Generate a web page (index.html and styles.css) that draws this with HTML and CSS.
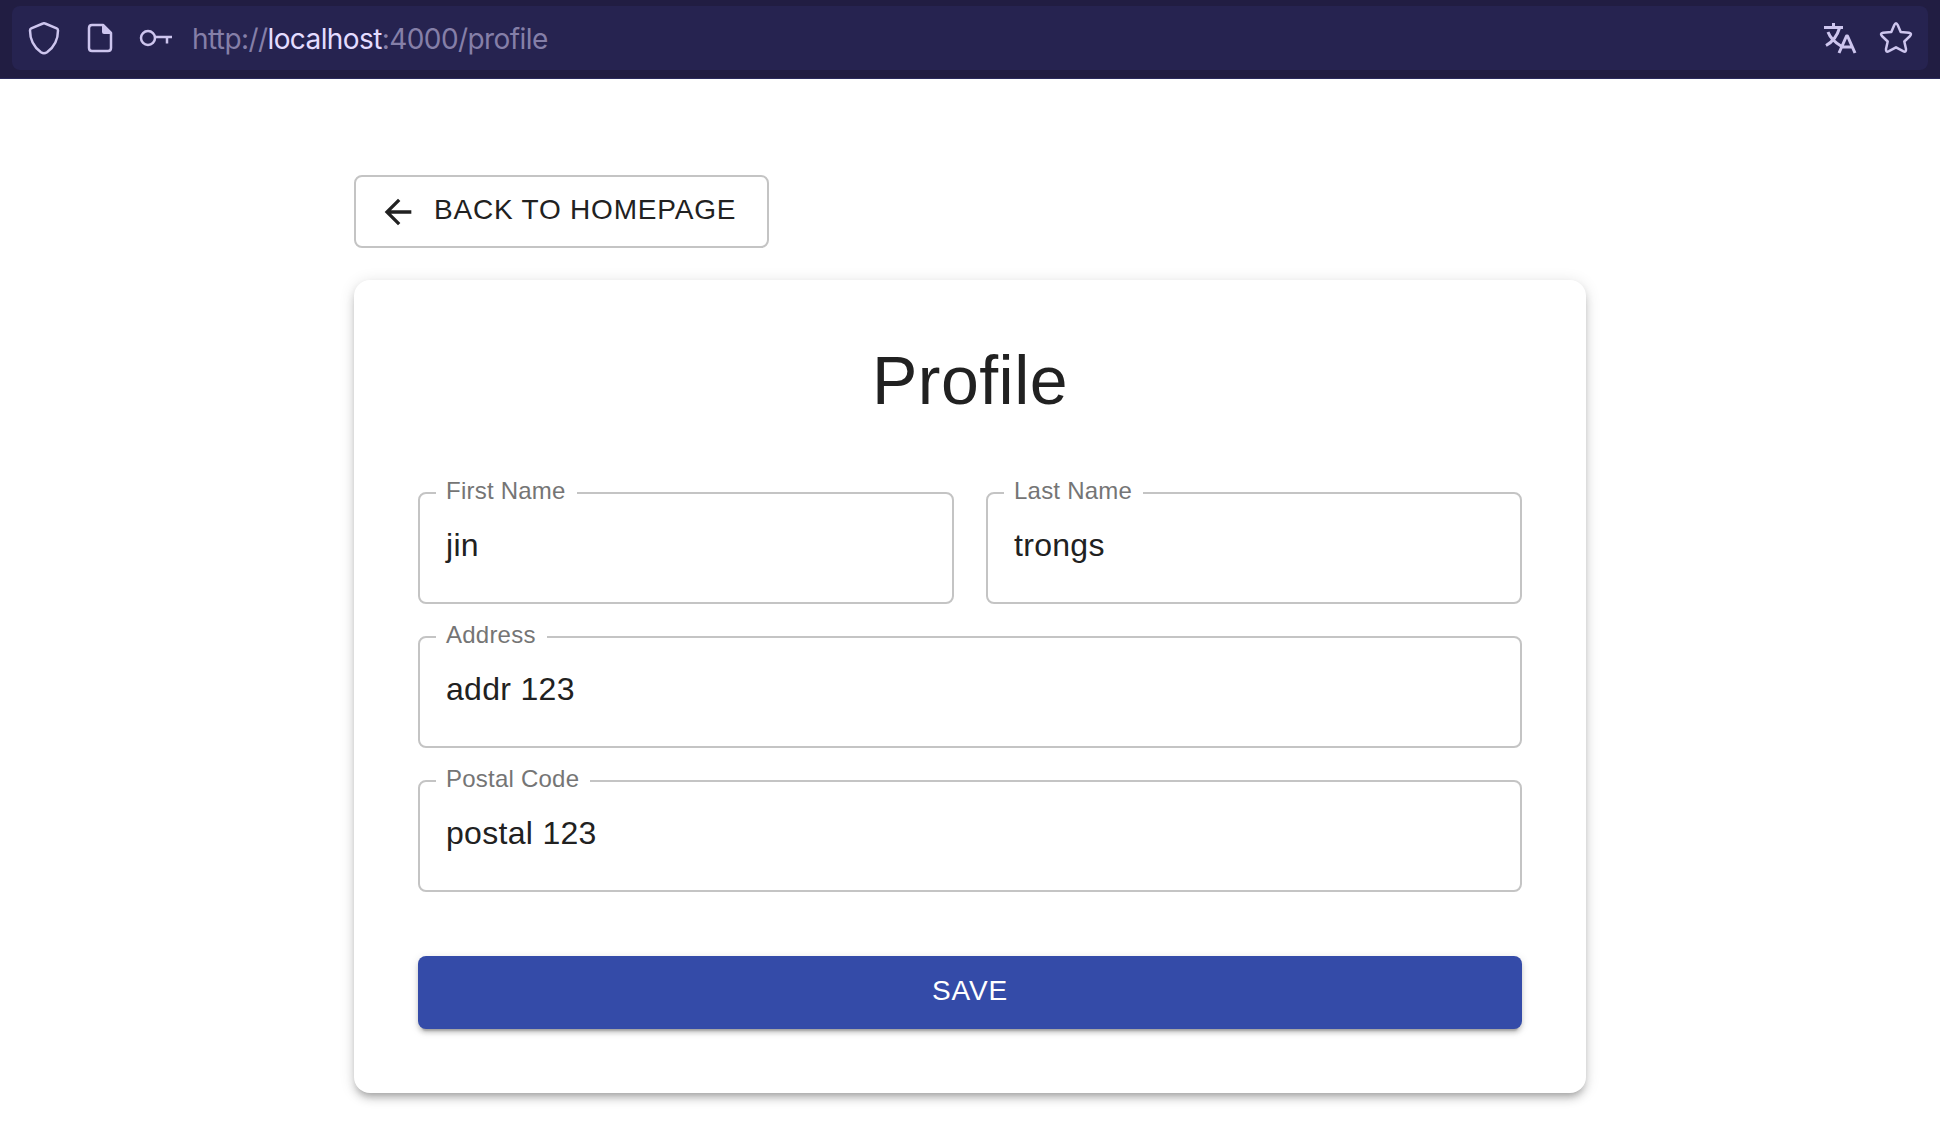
FILE: index.html
```html
<!DOCTYPE html>
<html lang="en">
<head>
<meta charset="utf-8">
<title>Profile</title>
<link rel="stylesheet" href="styles.css">
</head>
<body>
<header class="toolbar">
  <div class="urlbar">
    <svg class="icon shield" width="32" height="34" viewBox="0 0 32 34"><path d="M14.9 2.5q1.1-.5 2.2 0l11.6 4.9q1.3.6 1.3 2c0 9.500-3 16-11 21.800q-3 2-6 0C5 25.400 2 18.900 2 9.400q0-1.400 1.300-2z"/></svg>
    <svg class="icon page" width="26" height="30" viewBox="0 0 26 30"><path d="M5 2h11l8 8v15q0 3-3 3H5q-3 0-3-3V5q0-3 3-3z"/><path class="fill" d="M15 1l10 9v1h-8q-2 0-2-2z"/></svg>
    <svg class="icon key" width="34" height="18" viewBox="0 0 34 18"><circle cx="9" cy="9" r="7"/><path d="M16 8h17M28 8v6.500"/></svg>
    <div class="url">http://<span class="host">localhost</span>:4000/profile</div>
    <svg class="icon translate" width="34" height="32" viewBox="0 0 34 32"><path d="M1 5.500h19M10.500 1v4M16.500 6Q13 18 3 23.500M5 10Q8 18 18 24M16 31l7.500-17h1L32 31M19 25h11"/></svg>
    <svg class="icon star" width="34" height="34" viewBox="0 0 34 34"><path d="M15.300 4q1.700-3.600 3.400 0l3 7 8.300.8q3.300.6 1.100 3.200l-5.800 5.500 1.700 7.600q.3 3.600-2.900 2.100L17 26.300l-7.100 3.900q-3.200 1.500-2.900-2.100l1.700-7.600L2.900 15q-2.200-2.600 1.100-3.200l8.300-.8z"/></svg>
  </div>
</header>
<main class="container">
  <a class="button outlined">
    <svg class="arrow" width="40" height="40" viewBox="0 0 24 24"><path d="M20 11H7.830l5.590-5.590L12 4l-8 8 8 8 1.410-1.410L7.830 13H20v-2z"/></svg>
    <span>BACK TO HOMEPAGE</span>
  </a>
  <section class="card">
    <h1 class="title">Profile</h1>
    <form class="form">
      <div class="field"><label class="label">First Name</label><div class="value">jin</div></div>
      <div class="field"><label class="label">Last Name</label><div class="value">trongs</div></div>
      <div class="field wide"><label class="label">Address</label><div class="value">addr 123</div></div>
      <div class="field wide"><label class="label">Postal Code</label><div class="value">postal 123</div></div>
    </form>
    <button class="button contained" type="button">SAVE</button>
  </section>
</main>
</body>
</html>
```
FILE: styles.css
```css
* { box-sizing: border-box; }
body {
  margin: 0;
  height: 1130px;
  overflow: hidden;
  background: #fff;
  color: #212121;
  font-family: "Liberation Sans", Arial, sans-serif;
}
.toolbar {
  height: 79px;
  padding: 6px 12px 8px;
  background: #211d42;
  border-bottom: 1px solid #2b2a5c;
}
.urlbar {
  display: flex;
  align-items: center;
  height: 64px;
  padding: 0 15px 0 16px;
  border-radius: 8px;
  background: #262350;
}
.icon {
  flex: none;
  fill: none;
  stroke: #cdc5ee;
  stroke-width: 2.5;
  stroke-linejoin: round;
}
.icon .fill { fill: #cdc5ee; stroke: none; }
.page { margin-left: 27px; }
.key { margin-left: 26px; }
.translate { stroke-width: 3; }
.url {
  flex: 1;
  margin-left: 19px;
  padding-top: 2px;
  color: #857fa8;
  font: 28px/40px Inter, sans-serif;
  letter-spacing: -0.59px;
  white-space: nowrap;
}
.host { color: #e4dcff; }
.star { margin-left: 22px; }
.container { width: 1232px; margin: 96px auto 0; }
.button {
  display: flex;
  align-items: center;
  height: 73px;
  border-radius: 8px;
  font: 28px/48px "Liberation Sans", Arial, sans-serif;
  letter-spacing: 0.8px;
}
.outlined {
  width: 415px;
  padding: 0 0 0 22px;
  border: 2px solid #c4c4c4;
}
.outlined span { margin: -4px 0 0 16px; white-space: nowrap; }
.arrow { flex: none; fill: #212121; }
.card {
  height: 813px;
  margin-top: 32px;
  padding: 62px 64px 64px;
  border-radius: 16px;
  background: #fff;
  box-shadow: 0 6px 6px -4px rgba(0,0,0,.2), 0 6px 8px rgba(0,0,0,.14), 0 2px 16px rgba(0,0,0,.12);
}
.title {
  margin: 0;
  font-size: 68px;
  font-weight: 400;
  line-height: 76px;
  letter-spacing: 0.5px;
  text-align: center;
}
.form {
  display: grid;
  grid-template-columns: 1fr 1fr;
  gap: 32px;
  margin-top: 74px;
}
.field {
  position: relative;
  height: 112px;
  padding: 32px 26px;
  border: 2px solid #c4c4c4;
  border-radius: 8px;
}
.wide { grid-column: 1 / -1; }
.label {
  position: absolute;
  top: -17px;
  left: 16px;
  padding: 0 11px 0 10px;
  background: #fff;
  color: #757575;
  font-size: 24px;
  line-height: 28px;
  letter-spacing: 0.225px;
}
.value { font-size: 32px; line-height: 38px; letter-spacing: 0.3px; }
.contained {
  justify-content: center;
  width: 100%;
  margin-top: 64px;
  padding: 0 0 4px;
  border: 0;
  background: #344ba8;
  color: #fff;
  box-shadow: 0 6px 2px -4px rgba(0,0,0,.2), 0 4px 4px rgba(0,0,0,.14), 0 2px 10px rgba(0,0,0,.12);
}
```
